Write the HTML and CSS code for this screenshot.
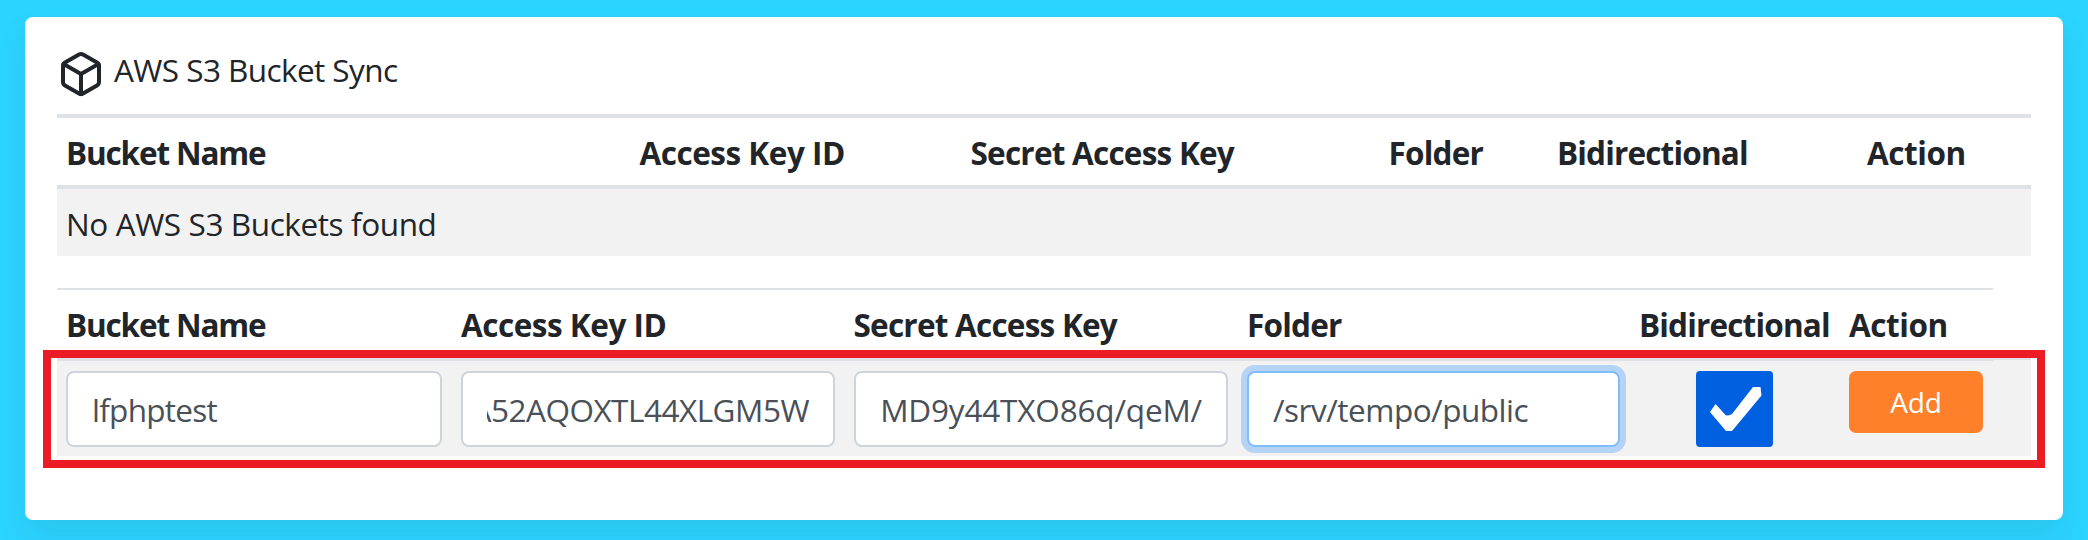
FILE: index.html
```html
<!DOCTYPE html>
<html lang="en">
<head>
<meta charset="utf-8">
<title>AWS S3 Bucket Sync</title>
<link rel="stylesheet" href="styles.css">
</head>
<body>
<main class="card">
  <h1 class="card-title">
    <svg class="icon-box" viewBox="0 0 24 24" fill="none" stroke="currentColor" stroke-width="2" stroke-linecap="round" stroke-linejoin="round"><path d="M21 16V8a2 2 0 0 0-1-1.73l-7-4a2 2 0 0 0-2 0l-7 4A2 2 0 0 0 3 8v8a2 2 0 0 0 1 1.73l7 4a2 2 0 0 0 2 0l7-4A2 2 0 0 0 21 16z"/><path d="M3.27 6.96 12 12.01l8.73-5.05"/><path d="M12 22.08V12"/></svg>
    <span class="title-text">AWS S3 Bucket Sync</span>
  </h1>

  <section class="bucket-list">
    <div class="list-head">
      <span class="th t-bucket">Bucket Name</span>
      <span class="th t-access">Access Key ID</span>
      <span class="th t-secret">Secret Access Key</span>
      <span class="th t-folder">Folder</span>
      <span class="th t-bidi">Bidirectional</span>
      <span class="th t-action">Action</span>
    </div>
    <div class="list-empty">No AWS S3 Buckets found</div>
  </section>

  <section class="bucket-form">
    <div class="form-head">
      <span class="th t-bucket">Bucket Name</span>
      <span class="th t-access">Access Key ID</span>
      <span class="th t-secret">Secret Access Key</span>
      <span class="th t-folder">Folder</span>
      <span class="th t-bidi">Bidirectional</span>
      <span class="th t-action">Action</span>
    </div>
    <div class="form-row">
      <div class="field f-name"><span class="value">lfphptest</span></div>
      <div class="field f-access"><span class="value">A52AQOXTL44XLGM5W</span></div>
      <div class="field f-secret"><span class="value">MD9y44TXO86q/qeM/</span></div>
      <div class="field f-folder focused"><span class="value">/srv/tempo/public</span></div>
      <div class="checkbox" role="checkbox" aria-checked="true"><svg class="check" viewBox="0 0 77 76"><path d="M14 41 19.500 33 30 44.500Q33 44.500 36 43L57 16H64.500L65.500 24.500 36 60H30Z" fill="#fff"/></svg></div>
      <button class="add-btn" type="button">Add</button>
    </div>
    <div class="highlight"></div>
  </section>
</main>
</body>
</html>
```
FILE: styles.css
```css
* { box-sizing: border-box; }

body {
  margin: 0;
  height: 540px;
  padding: 17px 25px 20px;
  overflow: hidden;
  background: #2bd4ff;
  color: #212529;
  font: 31.5px/48px "Open Sans", sans-serif;
}

.card {
  width: 2038px;
  height: 503px;
  padding: 33px 32px 0;
  background: #fff;
  border-radius: 8px;
  box-shadow: 0 16px 32px rgba(33, 37, 41, .08);
}

.card-title {
  display: flex;
  gap: 9px;
  height: 64px;
  margin: 0;
  font-size: inherit;
  font-weight: 400;
}

.icon-box { width: 48px; height: 48px; }
.title-text { margin-top: -4px; letter-spacing: -.57px; }

.th { font-weight: 700; white-space: nowrap; }
.t-bucket { letter-spacing: -1.16px; }
.t-access { letter-spacing: -.48px; }
.t-secret { letter-spacing: -.77px; }
.t-folder { letter-spacing: -.79px; }
.t-bidi { letter-spacing: -.83px; }
.t-action { letter-spacing: -.44px; }

.list-head {
  display: grid;
  grid-template-columns: 573.5px 331px 418px 168.5px 310px 1fr;
  height: 75px;
  padding: 11px 0 8px 9px;
  border-top: 4px solid #dee2e6;
  border-bottom: 4px solid #dee2e6;
}

.list-empty {
  height: 67px;
  padding: 11px 9px 8px;
  background: #f2f2f2;
  letter-spacing: -.4px;
}

.bucket-form { position: relative; margin-top: 32px; }

.form-head {
  position: relative;
  display: grid;
  grid-template-columns: 395px 392.5px 393.5px 392px 210px 1fr;
  width: 1936px;
  height: 73px;
  padding: 11px 0 8px 9px;
  border-top: 2px solid #dee2e6;
  border-bottom: 4px solid #dee2e6;
}

.form-row {
  display: flex;
  align-items: flex-start;
  height: 95px;
  padding: 10px 0 0 9px;
  background: #f2f2f2;
  box-shadow: 0 -1px #f2f2f2, 0 -3px #dee2e6;
}

.field {
  display: flex;
  flex: none;
  width: 374px;
  height: 76px;
  margin-right: 19px;
  padding: 1px 24px 0;
  line-height: 72px;
  color: #495057;
  background: #fff;
  border: 2px solid #ced4da;
  border-radius: 8px;
}

.value { white-space: nowrap; }
.f-name { width: 376px; letter-spacing: -.73px; }
.f-access, .f-secret { justify-content: flex-end; overflow: clip; overflow-clip-margin: content-box; }
.f-access { letter-spacing: -.49px; }
.f-secret { letter-spacing: -.17px; }
.f-folder { width: 373px; margin-right: 76px; letter-spacing: -.49px; }

.focused {
  border-color: #80bdff;
  box-shadow: 0 0 0 6px rgba(0, 123, 255, .25);
}

.checkbox {
  flex: none;
  width: 77px;
  height: 76px;
  margin-right: 76px;
  background: #0060df;
  border-radius: 4px;
}

.check { display: block; width: 77px; height: 76px; }

.add-btn {
  width: 134px;
  height: 62px;
  padding: 0;
  border: 0;
  border-radius: 7px;
  background: #ff802b;
  color: #fff;
  font: 28px/62px "Open Sans", sans-serif;
  letter-spacing: -.17px;
}

/* Callout frame laid over the input row */
.highlight {
  position: absolute;
  top: 62px;
  left: -14px;
  width: 2002px;
  height: 118px;
  border: 8px solid #ed1c24;
}
```
